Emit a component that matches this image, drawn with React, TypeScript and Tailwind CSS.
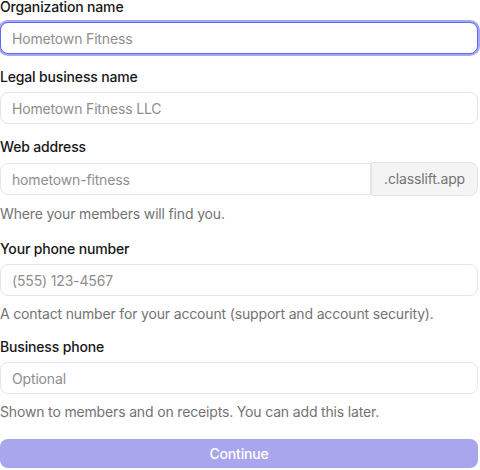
import React from "react";

const inputBase =
  "block h-8 w-full rounded-lg border border-[#e5e5e5] bg-white pl-[11px] pr-3 text-sm tracking-[-0.16px] text-[#171717] placeholder:text-[#8e8e8e] outline-none";

function Label({ children }: { children: React.ReactNode }) {
  return (
    <label className="mb-2 block text-sm font-medium leading-none tracking-[-0.16px] text-[#171717]">
      {children}
    </label>
  );
}

function Helper({ children, extra = "" }: { children: React.ReactNode; extra?: string }) {
  return (
    <p className={"mt-2 text-sm leading-5 tracking-[-0.16px] text-[#737373] " + extra}>
      {children}
    </p>
  );
}

export default function App() {
  return (
    <div
      className="w-[478px] bg-white"
      style={{ fontFamily: "Inter, 'Noto Sans', sans-serif" }}
    >
      <div className="flex flex-col gap-4">
        <div>
          <Label>Organization name</Label>
          <input
            className="block h-8 w-full rounded-lg border border-[#6366f1] bg-white pl-[11px] pr-3 text-sm tracking-[-0.16px] text-[#171717] placeholder:text-[#8e8e8e] outline-none ring-2 ring-[#a5a8f5]"
            placeholder="Hometown Fitness"
          />
        </div>
        <div>
          <Label>Legal business name</Label>
          <input className={inputBase} placeholder="Hometown Fitness LLC" />
        </div>
        <div>
          <Label>Web address</Label>
          <div className="mt-px flex h-[34px] items-stretch">
            <input
              className="block h-8 min-w-0 flex-1 self-center rounded-l-lg border border-[#e5e5e5] bg-white pl-[11px] pr-3 text-sm tracking-[-0.16px] text-[#171717] placeholder:text-[#8e8e8e] outline-none"
              placeholder="hometown-fitness"
            />
            <div className="flex items-center rounded-r-lg border border-[#e5e5e5] bg-[#f4f4f4] px-3 text-sm tracking-[-0.16px] text-[#737373]">
              .classlift.app
            </div>
          </div>
          <Helper extra="mb-0.5">Where your members will find you.</Helper>
        </div>
        <div>
          <Label>Your phone number</Label>
          <input className={inputBase} placeholder="(555) 123-4567" />
          <Helper>A contact number for your account (support and account security).</Helper>
        </div>
        <div>
          <Label>Business phone</Label>
          <input className={inputBase} placeholder="Optional" />
          <Helper>Shown to members and on receipts. You can add this later.</Helper>
        </div>
        <button className="mt-px flex h-[29px] w-full items-center justify-center rounded-lg bg-[#a8a6ec] text-sm font-medium tracking-[-0.16px] text-white">
          Continue
        </button>
      </div>
    </div>
  );
}
